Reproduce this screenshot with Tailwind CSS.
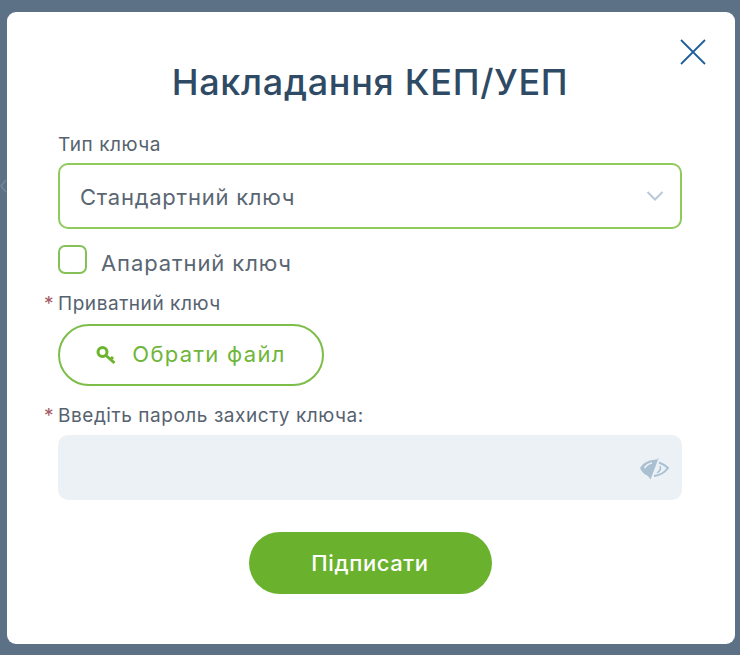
<!DOCTYPE html>
<html lang="uk">
<head>
<meta charset="utf-8">
<script src="https://cdn.jsdelivr.net/npm/@tailwindcss/browser@4"></script>
</head>
<body class="m-0 h-[655px] w-[740px] overflow-hidden bg-[#5d7186] font-['Inter','Noto_Sans',sans-serif]">
<div class="relative h-[655px] w-[740px] pl-[7px] pt-[12px]">
  <svg viewBox="0 0 7 14" class="absolute left-0 top-[179px] h-[14px] w-[7px]" fill="none" stroke="#75889b" stroke-width="1.300"><path d="M6 1 1 7l5 6"/></svg>
  <div class="relative flex h-[632px] w-[728px] flex-col rounded-[9px] bg-white pl-[51px] pr-[53px]">
    <button class="absolute right-[29px] top-[27px] h-[26px] w-[26px] text-[#1f5f99]">
      <svg viewBox="0 0 26 26" class="h-full w-full" fill="none" stroke="currentColor" stroke-width="1.8"><path d="M1 1 25 25M25 1 1 25"/></svg>
    </button>
    <h1 class="mt-[49px] text-center text-[36px] leading-[42px] font-medium tracking-[0.7px] whitespace-nowrap text-[#2f4a64]">Накладання КЕП/УЕП</h1>
    <label class="mt-[30px] text-[19px] leading-[24px] tracking-[0.55px] text-[#56626f]">Тип ключа</label>
    <div class="mt-[6px] flex h-[66px] items-center justify-between rounded-[10px] border-2 border-[#8fca5a] pl-[20px] pr-[16px]">
      <span class="pt-[3px] text-[22px] tracking-[0.75px] text-[#5a6672]">Стандартний ключ</span>
      <svg viewBox="0 0 18 12" class="h-[12px] w-[18px]" fill="none" stroke="#b9c8d8" stroke-width="2"><path d="M1.500 2 9 9.500 16.500 2"/></svg>
    </div>
    <div class="mt-[16px] flex items-start">
      <span class="h-[29px] w-[29px] rounded-[7px] border-2 border-[#84c257] bg-white"></span>
      <span class="ml-[14px] pt-[3px] text-[22px] leading-[30px] tracking-[0.9px] text-[#5a6672]">Апаратний ключ</span>
    </div>
    <div class="relative mt-[14px] text-[19px] leading-[24px] tracking-[0.55px] text-[#56626f]"><span class="absolute left-[-14px] top-0 text-[#a5585f]">*</span>Приватний ключ</div>
    <button class="mt-[8px] flex h-[62px] w-[266px] items-center justify-center rounded-full border-2 border-[#7dbd4a] bg-white">
      <svg viewBox="0 0 22 20" class="mr-[14px] h-[20px] w-[22px]" fill="none" stroke="#6cb32e" stroke-width="3"><circle cx="6.500" cy="7" r="4.500"/><path d="M10 10.500 18.500 18M14.500 14.500 17 12"/></svg>
      <span class="pb-[2px] text-[22px] tracking-[1.3px] text-[#6fb53a]">Обрати файл</span>
    </button>
    <div class="relative mt-[18px] text-[19px] leading-[24px] tracking-[0.55px] text-[#56626f]"><span class="absolute left-[-14px] top-0 text-[#a5585f]">*</span>Введіть пароль захисту ключа:</div>
    <div class="mt-[7px] flex h-[65px] items-center justify-end rounded-[10px] bg-[#ecf1f6] pr-[13px]">
      <svg viewBox="0 0 30 24" class="h-[24px] w-[30px]" fill="none" stroke="#a9c0d2" stroke-width="2"><path fill="#a9c0d2" stroke="none" d="M20 1 11.500 23.500 9 20C5 18.500 2.500 15.500 1 12 4 7 10 3.500 18 3.500Z"/><path stroke="#ecf1f6" stroke-width="1.600" d="M5.500 12C7.500 9 10 7.500 13 7"/><path d="M20 6.500C24 8 27 10 29 12 26 16 21 19.500 15 20"/><path stroke-width="1.500" d="M21 10C22.500 13 21 15 18 17"/></svg>
    </div>
    <button class="mx-auto mt-[32px] h-[62px] w-[243px] rounded-full bg-[#6ab22d] text-[22px] font-medium tracking-[0.6px] text-white">Підписати</button>
  </div>
</div>
</body>
</html>
